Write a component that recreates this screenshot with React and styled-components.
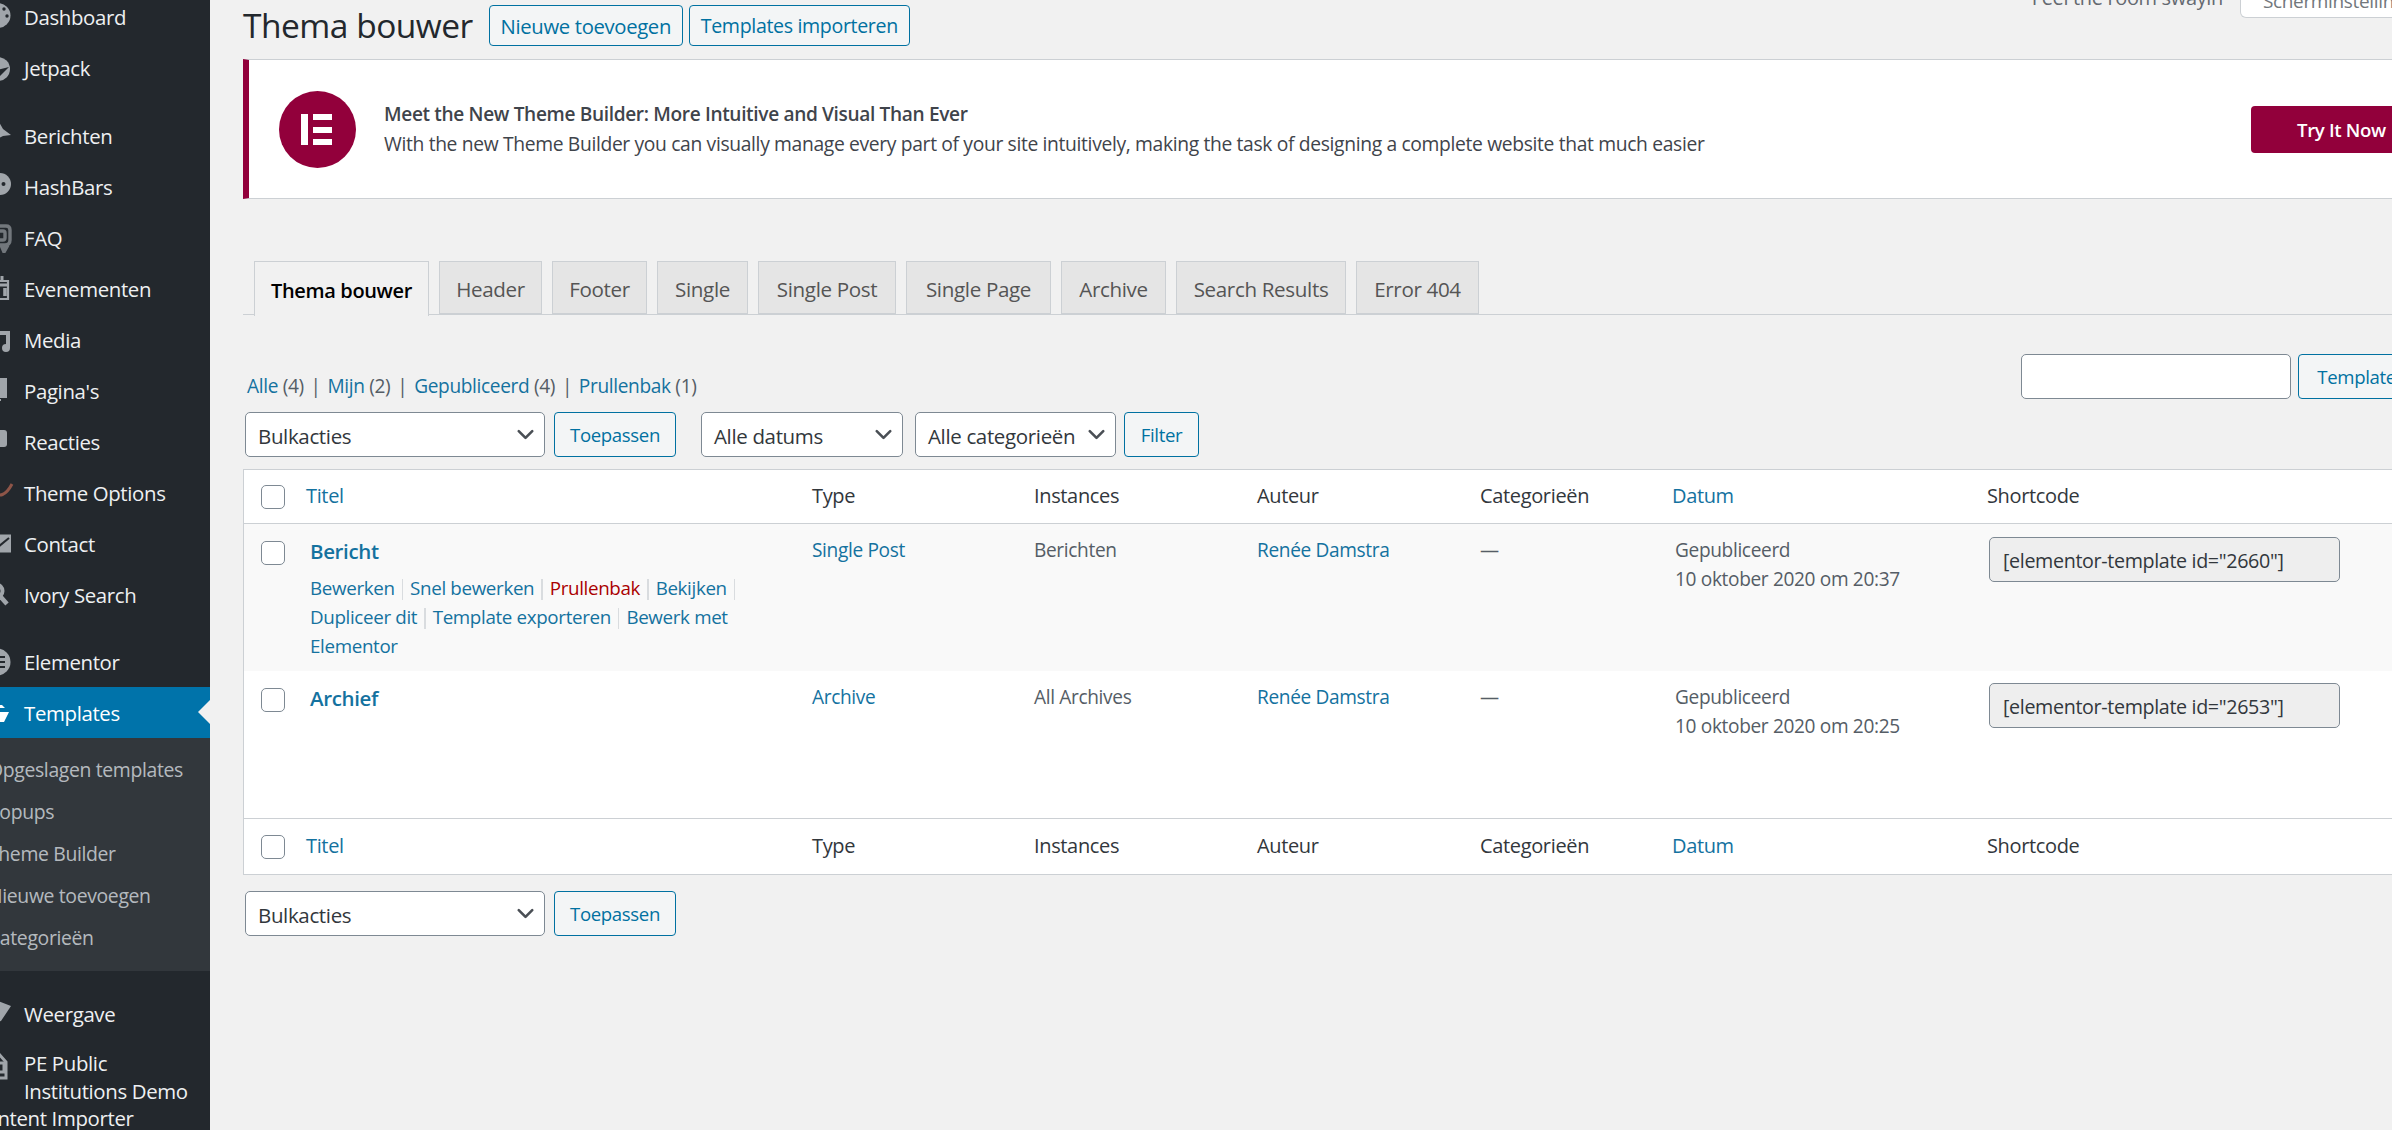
import React from "react";
import styled, { createGlobalStyle } from "styled-components";
import { ChevronDown } from "lucide-react";

const Global = createGlobalStyle`
  html, body { margin: 0; padding: 0; background: #f1f1f1; }
  body { font-family: "Open Sans", "Noto Sans", "Liberation Sans", sans-serif; color: #444; letter-spacing: -0.35px; }
  * { box-sizing: border-box; }
`;

const Shell = styled.div`
  display: flex;
  width: 2392px;
  height: 1130px;
  overflow: hidden;
  background: #f1f1f1;
`;

const Sidebar = styled.nav`
  flex: 0 0 210px;
  height: 1130px;
  background: #23282d;
  overflow: hidden;
`;

const MenuList = styled.div`
  margin-top: -9px;
  display: flex;
  flex-direction: column;
`;

const MenuItem = styled.div`
  position: relative;
  display: flex;
  align-items: center;
  height: 51px;
  padding-top: 1px;
  margin-top: ${(p) => p.$gap || 0}px;
  background: ${(p) => (p.$active ? "#0073aa" : "transparent")};
  color: ${(p) => (p.$active ? "#fff" : "#eef0f2")};
  font-size: 20.4px;
  white-space: nowrap;
`;

const TallItem = styled(MenuItem)`
  height: 100px;
  align-items: flex-start;
  padding-top: 11px;
`;

const IconSlot = styled.svg`
  flex: 0 0 34px;
  width: 34px;
  height: 30px;
  margin-left: -20px;
  margin-right: 10px;
`;

const Arrow = styled.span`
  position: absolute;
  right: 0;
  top: 13px;
  border-style: solid;
  border-width: 12px 12px 12px 0;
  border-color: transparent #f1f1f1 transparent transparent;
`;

const SubMenu = styled.div`
  background: #32373c;
  padding: 11px 0 12px;
`;

const SubItem = styled.div`
  height: 42px;
  line-height: 42px;
  margin-left: -12px;
  font-size: 19.4px;
  color: rgba(240, 245, 250, 0.7);
  white-space: nowrap;
`;

const NameStack = styled.div`
  display: flex;
  flex-direction: column;
  line-height: 27.5px;
`;

const ClippedLine = styled.span`
  margin-left: -51px;
`;

const Main = styled.main`
  flex: 1 1 auto;
  min-width: 0;
  overflow: hidden;
`;

const Content = styled.div`
  width: 2245px;
  margin-left: 33px;
`;

const HeadingRow = styled.header`
  display: flex;
  align-items: flex-start;
  height: 59px;
`;

const Heading = styled.h1`
  margin: 0 16px 0 0;
  font-size: 33.5px;
  font-weight: 400;
  line-height: 50px;
  color: #23282d;
  letter-spacing: -0.5px;
`;

const OutlineButton = styled.button`
  display: inline-flex;
  align-items: center;
  justify-content: center;
  flex: 0 0 auto;
  height: ${(p) => p.$h || 45}px;
  padding: 0 ${(p) => p.$px || 10}px;
  margin-top: ${(p) => p.$mt || 0}px;
  margin-right: ${(p) => p.$mr || 0}px;
  width: ${(p) => (p.$w ? p.$w + "px" : "auto")};
  background: #f3f5f6;
  border: 1.5px solid #0071a1;
  border-radius: 4px;
  color: #0071a1;
  font: inherit;
  font-size: ${(p) => p.$fs || 19}px;
  letter-spacing: -0.35px;
  white-space: nowrap;
`;

const TopRight = styled.div`
  margin-left: auto;
  display: flex;
  align-items: flex-end;
  height: 18px;
`;

const Dolly = styled.span`
  font-size: 20px;
  line-height: 20px;
  color: #646970;
  margin: 0 13px -5px 0;
  transform: translateY(-15px);
`;

const ScreenOptions = styled.div`
  width: 248px;
  height: 18px;
  padding-left: 22px;
  background: #fff;
  border: 1.5px solid #ccd0d4;
  border-top: 0;
  border-radius: 0 0 6px 6px;
  font-size: 19px;
  line-height: 2px;
  color: #72777c;
  overflow: hidden;
`;

const Notice = styled.section`
  display: flex;
  align-items: center;
  height: 140px;
  background: #fff;
  border: 1px solid #ccd0d4;
  border-left: 6px solid #92003b;
  padding: 0 58px 0 30px;
`;

const LogoCircle = styled.svg`
  flex: 0 0 77px;
  width: 77px;
  height: 77px;
  margin-right: 28px;
`;

const NoticeText = styled.div`
  flex: 1;
  display: flex;
  flex-direction: column;
  color: #3f444b;
`;

const NoticeTitle = styled.div`
  font-size: 19.1px;
  font-weight: 600;
  line-height: 29px;
`;

const NoticeBody = styled.div`
  font-size: 19.3px;
  line-height: 29px;
`;

const TryButton = styled.a`
  display: flex;
  align-items: center;
  width: 178px;
  height: 47px;
  padding-left: 46px;
  margin-top: 1px;
  background: #92003b;
  border-radius: 4px;
  color: #fff;
  font-size: 18.6px;
  font-weight: 600;
`;

const Tabs = styled.div`
  display: flex;
  align-items: flex-end;
  height: 54px;
  margin-top: 62px;
  padding-left: 11px;
  gap: 10px;
  border-bottom: 1.5px solid #ccd0d4;
`;

const Tab = styled.div`
  width: ${(p) => p.$w}px;
  height: ${(p) => (p.$active ? 55 : 53)}px;
  margin-bottom: ${(p) => (p.$active ? -2 : 0)}px;
  padding-top: 3px;
  display: flex;
  align-items: center;
  justify-content: center;
  background: ${(p) => (p.$active ? "#f1f1f1" : "#e5e5e5")};
  border: 1.5px solid #ccd0d4;
  border-bottom: ${(p) => (p.$active ? "0" : "1.5px solid #ccd0d4")};
  color: ${(p) => (p.$active ? "#000" : "#555")};
  font-size: ${(p) => (p.$active ? 20 : 20.6)}px;
  font-weight: ${(p) => (p.$active ? 600 : 500)};
  white-space: nowrap;
`;

const StatusRow = styled.div`
  display: flex;
  align-items: flex-start;
  justify-content: space-between;
  height: 58px;
  margin-top: 39px;
  padding-left: 4px;
`;

const StatusLinks = styled.div`
  display: flex;
  gap: 6.8px;
  padding-top: 17px;
  font-size: 19.1px;
  line-height: 30px;
  color: #555d66;
`;

const Link = styled.a`
  color: ${(p) => p.$color || "#14729f"};
  font-weight: ${(p) => p.$weight || 400};
`;

const SearchGroup = styled.div`
  display: flex;
  gap: 7px;
`;

const SearchInput = styled.div`
  width: 270px;
  height: 45px;
  background: #fff;
  border: 1.5px solid #7e8993;
  border-radius: 5px;
`;

const Tablenav = styled.div`
  display: flex;
  align-items: center;
  height: 45px;
  padding-left: 2px;
  margin-top: ${(p) => p.$mt || 0}px;
`;

const Select = styled.div`
  display: flex;
  align-items: center;
  justify-content: space-between;
  flex: 0 0 auto;
  width: ${(p) => p.$w}px;
  height: 45px;
  margin-right: ${(p) => p.$mr || 0}px;
  padding: 0 5px 0 12px;
  background: #fff;
  border: 1.5px solid #7e8993;
  border-radius: 5px;
  color: #32373c;
  font-size: 20.5px;
  white-space: nowrap;
`;

const SelectLabel = styled.span`
  padding-top: 3px;
`;

const Table = styled.div`
  margin-top: 12px;
  background: #fff;
  border: 1.5px solid #ccd0d4;
  border-right: 0;
`;

const Row = styled.div`
  display: grid;
  grid-template-columns: 62px 506px 222px 223px 223px 192px 315px 1fr;
  height: ${(p) => p.$h}px;
  background: ${(p) => p.$bg || "#fff"};
  border-top: ${(p) => (p.$line ? "1.5px solid #ccd0d4" : "0")};
  border-bottom: ${(p) => (p.$under ? "1.5px solid #ccd0d4" : "0")};
`;

const HeadCell = styled.div`
  display: flex;
  align-items: center;
  padding-bottom: 3px;
  font-size: 20px;
  color: #32373c;
`;

const Check = styled.input.attrs({ type: "checkbox" })`
  appearance: none;
  flex: 0 0 24px;
  width: 24px;
  height: 24px;
  margin: 3px 0 0 17px;
  background: #fff;
  border: 1.5px solid #7e8993;
  border-radius: 5px;
`;

const BodyCheck = styled(Check)`
  margin-top: 17px;
`;

const Cell = styled.div`
  padding-top: ${(p) => (p.$pt === undefined ? 12 : p.$pt)}px;
  padding-left: ${(p) => p.$pl || 0}px;
  font-size: 19.1px;
  line-height: 29px;
  color: #555d66;
`;

const RowTitle = styled.a`
  display: block;
  font-size: 20.5px;
  font-weight: 600;
  line-height: 29px;
  color: #14729f;
  margin-bottom: 8px;
  margin-top: 1px;
`;

const Actions = styled.div`
  width: 470px;
  font-size: 18.8px;
  line-height: 29px;
`;

const SepBar = styled.span`
  display: inline-block;
  width: 1.5px;
  height: 21px;
  margin: 0 7px;
  vertical-align: -5px;
  background: #d9dcdf;
`;

const ShortcodeBox = styled.div`
  display: flex;
  align-items: center;
  width: 351px;
  height: 45px;
  margin-top: ${(p) => p.$mt}px;
  margin-left: 2px;
  padding: 2px 0 0 13px;
  background: #eee;
  border: 1.5px solid #7e8993;
  border-radius: 5px;
  font-size: 19.7px;
  color: #32373c;
  white-space: nowrap;
`;

const GREY = "#a0a5aa";
const DARK = "#23282d";

const Icon = ({ children }) => (
  <IconSlot viewBox="-20 -15 34 30" aria-hidden="true">
    {children}
  </IconSlot>
);

const icons = {
  dashboard: (
    <g>
      <circle cx="-2" cy="-1.5" r="12.5" fill={GREY} />
      <circle cx="4" cy="-8" r="1.7" fill={DARK} />
      <circle cx="7" cy="-1" r="1.7" fill={DARK} />
    </g>
  ),
  jetpack: (
    <g>
      <circle cx="-2" cy="1" r="12" fill={GREY} />
      <polygon points="-3,2 9,-1 -1,9" fill={DARK} />
    </g>
  ),
  pin: <polygon points="-10,-2 -1,-14 3,-7 11,-1 3,0 -3,3 -6,11 -10,5" fill={GREY} />,
  hash: (
    <g>
      <circle cx="0" cy="-3" r="11" fill={GREY} />
      <polygon points="-8,4 -2,8 -8,13" fill={GREY} />
      <circle cx="3.5" cy="-3" r="2" fill={DARK} />
    </g>
  ),
  faq: (
    <g fill="none" stroke="#72777c" strokeWidth="3.4">
      <path d="M-10 -12 H6 Q10 -12 10 -8 V2 Q10 7 5 7 H-10" />
      <path d="M-10 -7 H3 Q5 -7 5 -5 V0 Q5 2 3 2 H-5" />
      <path d="M1 7 L4 14 L8 7" fill="#72777c" />
    </g>
  ),
  calendar: (
    <g fill="none" stroke={GREY} strokeWidth="2.2">
      <path d="M-10 -8 H8 V10 H-10 Z" />
      <path d="M2 -13 V-7" strokeWidth="3" />
      <path d="M-10 -4 H8" strokeWidth="3" />
      <path d="M-3 -1 V7 M5 -1 V7" strokeWidth="3.6" />
    </g>
  ),
  media: (
    <g fill={GREY}>
      <rect x="-10" y="-8" width="6" height="4" />
      <path d="M-2 -9 H10 V8 A4 4 0 1 1 6 4 V-5 H-2 Z" />
      <rect x="-10" y="-1" width="10" height="6" />
    </g>
  ),
  page: (
    <g fill={GREY}>
      <rect x="-10" y="-13" width="17" height="20" />
      <rect x="-2" y="8" width="3" height="2" />
    </g>
  ),
  comment: <rect x="-10" y="-12" width="17" height="17" rx="3" fill={GREY} />,
  theme: <path d="M-8 -1 Q3 8 12 -9" fill="none" stroke="#8d5548" strokeWidth="3" />,
  contact: (
    <g>
      <rect x="-10" y="-9.5" width="21" height="18" fill={GREY} />
      <path d="M-2 3 L9 -6" stroke={DARK} strokeWidth="2" />
    </g>
  ),
  search: (
    <g fill="none" stroke={GREY} strokeWidth="4">
      <circle cx="-4" cy="-4" r="6.5" />
      <path d="M0 1 L7 9" strokeWidth="4.5" />
    </g>
  ),
  elementor: (
    <g>
      <circle cx="-3" cy="0" r="13.5" fill={GREY} />
      <path d="M0 -5 H5 M0 0 H5 M0 5 H5" stroke={DARK} strokeWidth="2.2" />
    </g>
  ),
  folder: <path d="M-10 -8 H2 L5 -5 H-2 L-5 -1 H9 L4 9 H-10 Z" fill="#fff" />,
  brush: <path d="M-10 -14 L-2 -13 L11 -8 L1 7 L-10 9 Z M-6 -3 L4 -6" fill={GREY} />,
  home: (
    <g fill="none" stroke={GREY} strokeWidth="3">
      <path d="M-11 -2 L-2 -12 L6 -3 V13 H-10" />
      <path d="M-2 -2 H4 V7 H-2" />
    </g>
  ),
};

const topItems = [
  ["Dashboard", "dashboard"],
  ["Jetpack", "jetpack"],
  ["Berichten", "pin", 17],
  ["HashBars", "hash"],
  ["FAQ", "faq"],
  ["Evenementen", "calendar"],
  ["Media", "media"],
  ["Pagina's", "page"],
  ["Reacties", "comment"],
  ["Theme Options", "theme"],
  ["Contact", "contact"],
  ["Ivory Search", "search"],
  ["Elementor", "elementor", 16],
];

const subItems = ["Opgeslagen templates", "Popups", "Theme Builder", "Nieuwe toevoegen", "Categorieën"];

const tabs = [
  ["Thema bouwer", 175, true],
  ["Header", 103],
  ["Footer", 95],
  ["Single", 91],
  ["Single Post", 138],
  ["Single Page", 145],
  ["Archive", 105],
  ["Search Results", 170],
  ["Error 404", 123],
];

const Chevron = () => <ChevronDown size={27} strokeWidth={2.3} color="#4a4f55" />;

const Dropdown = ({ w, mr, children }) => (
  <Select $w={w} $mr={mr}>
    <SelectLabel>{children}</SelectLabel>
    <Chevron />
  </Select>
);

const HeaderRow = ({ line, under, h }) => (
  <Row $h={h} $line={line} $under={under}>
    <HeadCell>
      <Check />
    </HeadCell>
    <HeadCell>
      <Link>Titel</Link>
    </HeadCell>
    <HeadCell>Type</HeadCell>
    <HeadCell>Instances</HeadCell>
    <HeadCell>Auteur</HeadCell>
    <HeadCell>Categorieën</HeadCell>
    <HeadCell>
      <Link>Datum</Link>
    </HeadCell>
    <HeadCell>Shortcode</HeadCell>
  </Row>
);

const Sep = () => (
  <>
    <SepBar />
    <wbr />
  </>
);

const DataRow = ({ title, type, instance, date, id, bg, h, boxTop, actions }) => (
  <Row $h={h} $bg={bg}>
    <div>
      <BodyCheck />
    </div>
    <Cell $pl={4} $pt={12}>
      <RowTitle>{title}</RowTitle>
      {actions}
    </Cell>
    <Cell>
      <Link>{type}</Link>
    </Cell>
    <Cell>{instance}</Cell>
    <Cell>
      <Link>Renée Damstra</Link>
    </Cell>
    <Cell>—</Cell>
    <Cell $pl={3}>
      Gepubliceerd
      <br />
      {date}
    </Cell>
    <div>
      <ShortcodeBox $mt={boxTop}>[elementor-template id="{id}"]</ShortcodeBox>
    </div>
  </Row>
);

export default function App() {
  return (
    <>
      <Global />
      <Shell>
        <Sidebar>
          <MenuList>
            {topItems.map(([label, icon, gap]) => (
              <MenuItem key={label} $gap={gap}>
                <Icon>{icons[icon]}</Icon>
                {label}
              </MenuItem>
            ))}
            <MenuItem $active>
              <Icon>{icons.folder}</Icon>
              Templates
              <Arrow />
            </MenuItem>
            <SubMenu>
              {subItems.map((s) => (
                <SubItem key={s}>{s}</SubItem>
              ))}
            </SubMenu>
            <MenuItem $gap={17}>
              <Icon>{icons.brush}</Icon>
              Weergave
            </MenuItem>
            <TallItem>
              <Icon>{icons.home}</Icon>
              <NameStack>
                <span>PE Public</span>
                <span>Institutions Demo</span>
                <ClippedLine>Content Importer</ClippedLine>
              </NameStack>
            </TallItem>
          </MenuList>
        </Sidebar>
        <Main>
          <Content>
            <HeadingRow>
              <Heading>Thema bouwer</Heading>
              <OutlineButton $w={194} $h={41} $mt={5} $mr={6} $fs={20.3}>
                Nieuwe toevoegen
              </OutlineButton>
              <OutlineButton $w={221} $h={41} $mt={5} $fs={19.6}>
                Templates importeren
              </OutlineButton>
              <TopRight>
                <Dolly>Feel the room swayin'</Dolly>
                <ScreenOptions>Scherminstellingen</ScreenOptions>
              </TopRight>
            </HeadingRow>
            <Notice>
              <LogoCircle viewBox="0 0 77 77" aria-hidden="true">
                <circle cx="38.5" cy="38.5" r="38.5" fill="#92003b" />
                <rect x="22" y="23" width="7" height="31" fill="#fff" />
                <rect x="34" y="23" width="19" height="6" fill="#fff" />
                <rect x="34" y="36" width="19" height="6" fill="#fff" />
                <rect x="34" y="48" width="19" height="6" fill="#fff" />
              </LogoCircle>
              <NoticeText>
                <NoticeTitle>Meet the New Theme Builder: More Intuitive and Visual Than Ever</NoticeTitle>
                <NoticeBody>
                  With the new Theme Builder you can visually manage every part of your site intuitively, making the
                  task of designing a complete website that much easier
                </NoticeBody>
              </NoticeText>
              <TryButton>Try It Now</TryButton>
            </Notice>
            <Tabs>
              {tabs.map(([t, w, a]) => (
                <Tab key={t} $w={w} $active={a}>
                  {t}
                </Tab>
              ))}
            </Tabs>
            <StatusRow>
              <StatusLinks>
                <span>
                  <Link>Alle</Link> (4)
                </span>
                <span>|</span>
                <span>
                  <Link>Mijn</Link> (2)
                </span>
                <span>|</span>
                <span>
                  <Link>Gepubliceerd</Link> (4)
                </span>
                <span>|</span>
                <span>
                  <Link>Prullenbak</Link> (1)
                </span>
              </StatusLinks>
              <SearchGroup>
                <SearchInput />
                <OutlineButton $w={190} $px={16} $fs={18.6}>
                  Templates zoeken
                </OutlineButton>
              </SearchGroup>
            </StatusRow>
            <Tablenav>
              <Dropdown w={300} mr={9}>
                Bulkacties
              </Dropdown>
              <OutlineButton $w={122} $mr={25} $fs={18.6}>
                Toepassen
              </OutlineButton>
              <Dropdown w={202} mr={12}>
                Alle datums
              </Dropdown>
              <Dropdown w={201} mr={8}>
                Alle categorieën
              </Dropdown>
              <OutlineButton $w={75} $fs={18.6}>
                Filter
              </OutlineButton>
            </Tablenav>
            <Table>
              <HeaderRow h={54} under />
              <DataRow
                title="Bericht"
                type="Single Post"
                instance="Berichten"
                date="10 oktober 2020 om 20:37"
                id="2660"
                bg="#f9f9f9"
                h={147}
                boxTop={13}
                actions={
                  <Actions>
                    <Link>Bewerken</Link>
                    <Sep />
                    <Link>Snel bewerken</Link>
                    <Sep />
                    <Link $color="#a00">Prullenbak</Link>
                    <Sep />
                    <Link>Bekijken</Link>
                    <Sep />
                    <Link>Dupliceer dit</Link>
                    <Sep />
                    <Link>Template exporteren</Link>
                    <Sep />
                    <Link>Bewerk met Elementor</Link>
                  </Actions>
                }
              />
              <DataRow
                title="Archief"
                type="Archive"
                instance="All Archives"
                date="10 oktober 2020 om 20:25"
                id="2653"
                h={147}
                boxTop={12}
              />
              <HeaderRow h={56} line />
            </Table>
            <Tablenav $mt={16}>
              <Dropdown w={300} mr={9}>
                Bulkacties
              </Dropdown>
              <OutlineButton $w={122} $fs={18.6}>
                Toepassen
              </OutlineButton>
            </Tablenav>
          </Content>
        </Main>
      </Shell>
    </>
  );
}
